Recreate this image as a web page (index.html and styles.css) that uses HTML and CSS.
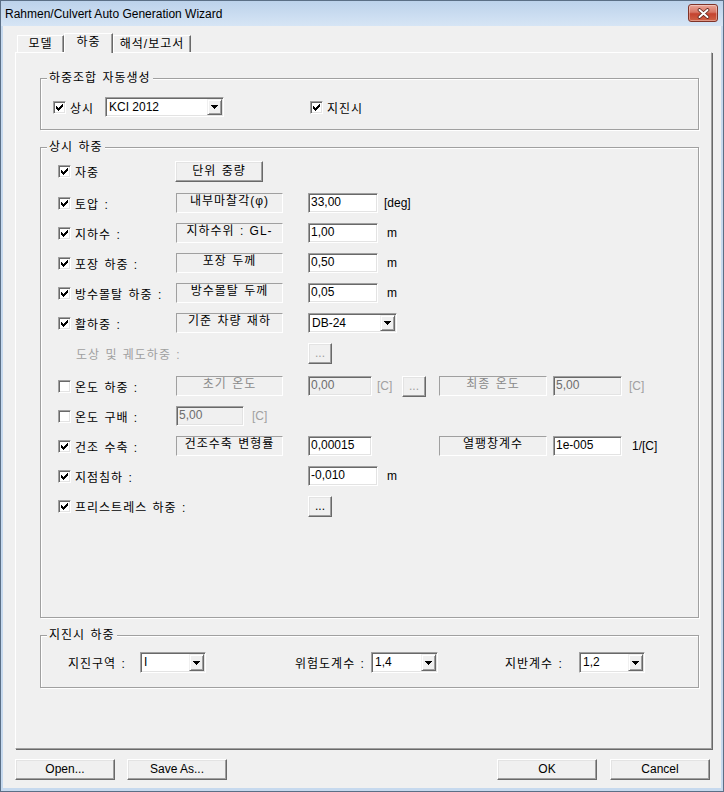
FILE: index.html
```html
<!DOCTYPE html>
<html lang="ko">
<head>
  <meta charset="UTF-8">
  <title>Rahmen/Culvert Auto Generation Wizard</title>
  <link rel="stylesheet" href="styles.css">
</head>
<body>
  <div class="window">
    <div class="titlebar">
      <span class="title">Rahmen/Culvert Auto Generation Wizard</span>
      <span class="close-btn">
        <svg width="13" height="11" viewBox="0 0 13 11">
          <path d="M2.5 2L10.5 9M10.5 2L2.5 9" stroke="#5b231b" stroke-width="3.6" stroke-linecap="round" fill="none"/>
          <path d="M2.5 2L10.5 9M10.5 2L2.5 9" stroke="#fff" stroke-width="2" stroke-linecap="round" fill="none"/>
        </svg>
      </span>
    </div>

    <div class="client">
      <div class="tabs">
        <div class="tab t1">모델</div>
        <div class="tab t2 active">하중</div>
        <div class="tab t3">해석/보고서</div>
      </div>

      <div class="pane">
        <!-- 하중조합 -->
        <div class="group g1">
          <span class="legend">하중조합 자동생성</span>
          <div class="g1-row">
            <label class="chk-lbl w52"><span class="chk"><svg width="7" height="7" viewBox="0 0 7 7"><path d="M6 0h1v1H6zM5 1h2v1H5zM0 2h1v1H0zM4 2h3v1H4zM0 3h2v1H0zM3 3h3v1H3zM0 4h5v1H0zM1 5h3v1H1zM2 6h1v1H2z"/></svg></span>상시</label>
            <div class="combo w119"><span class="combo-val">KCI 2012</span><span class="drop"><svg width="7" height="4" viewBox="0 0 7 4"><path d="M0 0h7v1H0zM1 1h5v1H1zM2 2h3v1H2zM3 3h1v1H3z"/></svg></span></div>
            <label class="chk-lbl ml86"><span class="chk"><svg width="7" height="7" viewBox="0 0 7 7"><path d="M6 0h1v1H6zM5 1h2v1H5zM0 2h1v1H0zM4 2h3v1H4zM0 3h2v1H0zM3 3h3v1H3zM0 4h5v1H0zM1 5h3v1H1zM2 6h1v1H2z"/></svg></span>지진시</label>
          </div>
        </div>

        <!-- 상시 하중 -->
        <div class="group g2">
          <span class="legend">상시 하중</span>

          <div class="row">
            <label class="c1"><span class="chk"><svg width="7" height="7" viewBox="0 0 7 7"><path d="M6 0h1v1H6zM5 1h2v1H5zM0 2h1v1H0zM4 2h3v1H4zM0 3h2v1H0zM3 3h3v1H3zM0 4h5v1H0zM1 5h3v1H1zM2 6h1v1H2z"/></svg></span>자중</label>
            <div class="c2"><span class="btn w88 kr">단위 중량</span></div>
          </div>

          <div class="row mt2">
            <label class="c1"><span class="chk"><svg width="7" height="7" viewBox="0 0 7 7"><path d="M6 0h1v1H6zM5 1h2v1H5zM0 2h1v1H0zM4 2h3v1H4zM0 3h2v1H0zM3 3h3v1H3zM0 4h5v1H0zM1 5h3v1H1zM2 6h1v1H2z"/></svg></span>토압 :</label>
            <div class="c2"><span class="sbox">내부마찰각(φ)</span></div>
            <span class="edit w70">33,00</span>
            <span class="unit ml6">[deg]</span>
          </div>

          <div class="row">
            <label class="c1"><span class="chk"><svg width="7" height="7" viewBox="0 0 7 7"><path d="M6 0h1v1H6zM5 1h2v1H5zM0 2h1v1H0zM4 2h3v1H4zM0 3h2v1H0zM3 3h3v1H3zM0 4h5v1H0zM1 5h3v1H1zM2 6h1v1H2z"/></svg></span>지하수 :</label>
            <div class="c2"><span class="sbox">지하수위 : GL-</span></div>
            <span class="edit w70">1,00</span>
            <span class="unit ml9">m</span>
          </div>

          <div class="row">
            <label class="c1"><span class="chk"><svg width="7" height="7" viewBox="0 0 7 7"><path d="M6 0h1v1H6zM5 1h2v1H5zM0 2h1v1H0zM4 2h3v1H4zM0 3h2v1H0zM3 3h3v1H3zM0 4h5v1H0zM1 5h3v1H1zM2 6h1v1H2z"/></svg></span>포장 하중 :</label>
            <div class="c2"><span class="sbox">포장 두께</span></div>
            <span class="edit w70">0,50</span>
            <span class="unit ml9">m</span>
          </div>

          <div class="row">
            <label class="c1"><span class="chk"><svg width="7" height="7" viewBox="0 0 7 7"><path d="M6 0h1v1H6zM5 1h2v1H5zM0 2h1v1H0zM4 2h3v1H4zM0 3h2v1H0zM3 3h3v1H3zM0 4h5v1H0zM1 5h3v1H1zM2 6h1v1H2z"/></svg></span>방수몰탈 하중 :</label>
            <div class="c2"><span class="sbox">방수몰탈 두께</span></div>
            <span class="edit w70">0,05</span>
            <span class="unit ml9">m</span>
          </div>

          <div class="row">
            <label class="c1"><span class="chk"><svg width="7" height="7" viewBox="0 0 7 7"><path d="M6 0h1v1H6zM5 1h2v1H5zM0 2h1v1H0zM4 2h3v1H4zM0 3h2v1H0zM3 3h3v1H3zM0 4h5v1H0zM1 5h3v1H1zM2 6h1v1H2z"/></svg></span>활하중 :</label>
            <div class="c2"><span class="sbox">기준 차량 재하</span></div>
            <div class="combo w89"><span class="combo-val">DB-24</span><span class="drop"><svg width="7" height="4" viewBox="0 0 7 4"><path d="M0 0h7v1H0zM1 1h5v1H1zM2 2h3v1H2zM3 3h1v1H3z"/></svg></span></div>
          </div>

          <div class="row">
            <span class="c12 dis">도상 및 궤도하중 :</span>
            <span class="btn w24 dis">...</span>
          </div>

          <div class="row mt3">
            <label class="c1"><span class="chk"></span>온도 하중 :</label>
            <div class="c2"><span class="sbox dis">초기 온도</span></div>
            <span class="edit w64 dis">0,00</span>
            <span class="unit ml5 w25 dis">[C]</span>
            <span class="btn w24 dis">...</span>
            <span class="sbox w108 ml13 dis">최종 온도</span>
            <span class="edit w69 ml6 dis">5,00</span>
            <span class="unit ml7 dis">[C]</span>
          </div>

          <div class="row">
            <label class="c1"><span class="chk"></span>온도 구배 :</label>
            <div class="c2">
              <span class="edit w68 ml1 dis">5,00</span>
              <span class="unit ml8 dis">[C]</span>
            </div>
          </div>

          <div class="row">
            <label class="c1"><span class="chk"><svg width="7" height="7" viewBox="0 0 7 7"><path d="M6 0h1v1H6zM5 1h2v1H5zM0 2h1v1H0zM4 2h3v1H4zM0 3h2v1H0zM3 3h3v1H3zM0 4h5v1H0zM1 5h3v1H1zM2 6h1v1H2z"/></svg></span>건조 수축 :</label>
            <div class="c2"><span class="sbox">건조수축 변형률</span></div>
            <span class="edit w64">0,00015</span>
            <span class="sbox w108 ml67">열팽창계수</span>
            <span class="edit w69 ml6">1e-005</span>
            <span class="unit ml10">1/[C]</span>
          </div>

          <div class="row">
            <label class="c1"><span class="chk"><svg width="7" height="7" viewBox="0 0 7 7"><path d="M6 0h1v1H6zM5 1h2v1H5zM0 2h1v1H0zM4 2h3v1H4zM0 3h2v1H0zM3 3h3v1H3zM0 4h5v1H0zM1 5h3v1H1zM2 6h1v1H2z"/></svg></span>지점침하 :</label>
            <div class="c2"></div>
            <span class="edit w70">-0,010</span>
            <span class="unit ml9">m</span>
          </div>

          <div class="row">
            <label class="c1"><span class="chk"><svg width="7" height="7" viewBox="0 0 7 7"><path d="M6 0h1v1H6zM5 1h2v1H5zM0 2h1v1H0zM4 2h3v1H4zM0 3h2v1H0zM3 3h3v1H3zM0 4h5v1H0zM1 5h3v1H1zM2 6h1v1H2z"/></svg></span>프리스트레스 하중 :</label>
            <div class="c2"></div>
            <span class="btn w24">...</span>
          </div>
        </div>

        <!-- 지진시 하중 -->
        <div class="group g3">
          <span class="legend">지진시 하중</span>
          <div class="g3-row">
            <span class="eq-lbl w72">지진구역 :</span>
            <div class="combo h21 w66"><span class="combo-val">I</span><span class="drop"><svg width="7" height="4" viewBox="0 0 7 4"><path d="M0 0h7v1H0zM1 1h5v1H1zM2 2h3v1H2zM3 3h1v1H3z"/></svg></span></div>
            <span class="eq-lbl w76 ml89">위험도계수 :</span>
            <div class="combo h21 w67"><span class="combo-val">1,4</span><span class="drop"><svg width="7" height="4" viewBox="0 0 7 4"><path d="M0 0h7v1H0zM1 1h5v1H1zM2 2h3v1H2zM3 3h1v1H3z"/></svg></span></div>
            <span class="eq-lbl w74 ml67">지반계수 :</span>
            <div class="combo h21 w66"><span class="combo-val">1,2</span><span class="drop"><svg width="7" height="4" viewBox="0 0 7 4"><path d="M0 0h7v1H0zM1 1h5v1H1zM2 2h3v1H2zM3 3h1v1H3z"/></svg></span></div>
          </div>
        </div>
      </div>

      <div class="buttons">
        <span class="btn bw">Open...</span>
        <span class="btn bw ml12">Save As...</span>
        <span class="btn bw push">OK</span>
        <span class="btn bw ml13">Cancel</span>
      </div>
    </div>
  </div>
</body>
</html>
```

FILE: styles.css
```css
* {
  box-sizing: border-box;
}

body {
  margin: 0;
  background: #fff;
  color: #000;
  font-family: "Liberation Sans", "Noto Sans CJK KR", sans-serif;
  font-size: 12px;
}

.tab,
.legend,
.c1,
.c12,
.chk-lbl,
.sbox,
.eq-lbl,
.kr {
  letter-spacing: 1px;
  word-spacing: 1px;
}

.window {
  width: 724px;
  height: 792px;
  border: 1px solid #5b6f86;
  background: #c6d9ee;
  padding: 0 2px 3px;
  display: flex;
  flex-direction: column;
}

/* title bar */
.titlebar {
  height: 25px;
  margin: 0 -2px;
  padding: 0 5px 0 4px;
  background: linear-gradient(#bcd2eb, #d6e5f5);
  display: flex;
  justify-content: space-between;
  align-items: flex-start;
  flex: none;
}

.title {
  margin-top: 6px;
  line-height: 14px;
}

.close-btn {
  width: 30px;
  height: 18px;
  margin-top: 3px;
  border: 1px solid #7f3328;
  border-radius: 3px;
  background: linear-gradient(#eaa698, #d77564 45%, #c4432f 55%, #d06246);
  box-shadow: inset 0 0 0 1px rgba(255, 255, 255, 0.35);
  display: flex;
  align-items: center;
  justify-content: center;
}

/* client area */
.client {
  flex: 1;
  background: #f0f0f0;
  padding: 7px 9px 0 12px;
  display: flex;
  flex-direction: column;
}

.tabs {
  display: flex;
  align-items: flex-end;
  height: 19px;
  padding-left: 2px;
  position: relative;
  z-index: 1;
}

.tab {
  height: 17px;
  border-top: 1px solid #fff;
  border-left: 1px solid #fff;
  border-right: 1px solid #696969;
  box-shadow: inset -1px 0 0 #a0a0a0;
  background: #f0f0f0;
  text-align: center;
  line-height: 14px;
  padding-top: 1px;
  white-space: nowrap;
}

.tab.active {
  height: 20px;
  margin-bottom: -1px;
}

.t1 { width: 47px; }
.t2 { width: 49px; }
.t3 { width: 78px; }

.pane {
  width: 697px;
  height: 697px;
  border: 1px solid;
  border-color: #fff #a0a0a0 #a0a0a0 #fff;
  box-shadow: 1px 1px 0 #696969;
  padding: 25px 12px 0 24px;
  flex: none;
}

/* group boxes */
.group {
  position: relative;
  border: 1px solid #a0a0a0;
  box-shadow: inset 1px 1px 0 #fff, 1px 1px 0 #fff;
  margin-bottom: 17px;
}

.legend {
  position: absolute;
  top: -8px;
  left: 6px;
  padding: 0 2px;
  background: #f0f0f0;
  line-height: 14px;
  white-space: nowrap;
}

.g1 {
  height: 52px;
  padding: 18px 0 0 12px;
}

.g2 {
  height: 471px;
  padding: 8px 0 0 17px;
}

.g3 {
  height: 53px;
  padding: 16px 0 0 27px;
}

.g1-row,
.g3-row {
  display: flex;
  align-items: center;
  white-space: nowrap;
}

.row {
  display: flex;
  align-items: center;
  height: 30px;
  white-space: nowrap;
}

.mt2 { margin-top: 2px; }
.mt3 { margin-top: 3px; }

.c1 {
  width: 117px;
  flex: none;
  display: flex;
  align-items: center;
  gap: 4px;
}

.c2 {
  width: 133px;
  flex: none;
  display: flex;
  align-items: center;
}

.c12 {
  width: 250px;
  flex: none;
  padding-left: 18px;
}

.chk-lbl {
  display: flex;
  align-items: center;
  gap: 4px;
  flex: none;
}

/* checkbox */
.chk {
  width: 13px;
  height: 13px;
  flex: none;
  background: #fff;
  border: 1px solid;
  border-color: #a0a0a0 #fff #fff #a0a0a0;
  box-shadow: inset 1px 1px 0 #696969, inset -1px -1px 0 #e3e3e3;
  display: flex;
  align-items: center;
  justify-content: center;
}

.chk svg {
  display: block;
  shape-rendering: crispEdges;
}

/* static sunken label */
.sbox {
  width: 107px;
  height: 20px;
  margin-left: 1px;
  flex: none;
  border: 1px solid;
  border-color: #a0a0a0 #fff #fff #a0a0a0;
  text-align: center;
  line-height: 14px;
}

.sbox.w108 { width: 108px; }

/* edit field */
.edit {
  height: 20px;
  flex: none;
  background: #fff;
  border: 1px solid;
  border-color: #a0a0a0 #fff #fff #a0a0a0;
  box-shadow: inset 1px 1px 0 #696969, inset -1px -1px 0 #e3e3e3;
  padding: 1px 0 0 2px;
  line-height: 14px;
}

.edit.dis {
  background: #f0f0f0;
  color: #6d6d6d;
}

.unit { flex: none; }

/* combo box */
.combo {
  height: 20px;
  flex: none;
  display: flex;
  background: #fff;
  border: 1px solid;
  border-color: #a0a0a0 #fff #fff #a0a0a0;
  box-shadow: inset 1px 1px 0 #696969, inset -1px -1px 0 #e3e3e3;
  padding: 1px;
}

.combo.h21 { height: 21px; }

.combo-val {
  flex: 1;
  padding-left: 2px;
  line-height: 16px;
}

.drop {
  width: 15px;
  flex: none;
  background: #f0f0f0;
  border: 1px solid;
  border-color: #f0f0f0 #696969 #696969 #f0f0f0;
  box-shadow: inset 1px 1px 0 #fff, inset -1px -1px 0 #a0a0a0;
  display: flex;
  align-items: center;
  justify-content: center;
}

.drop svg {
  display: block;
  shape-rendering: crispEdges;
}

/* push button */
.btn {
  height: 21px;
  flex: none;
  background: #f0f0f0;
  border: 1px solid;
  border-color: #fff #696969 #696969 #fff;
  box-shadow: inset -1px -1px 0 #a0a0a0, inset 1px 1px 0 #e3e3e3;
  text-align: center;
  line-height: 19px;
}

.dis { color: #a0a0a0; }
.sbox.dis { color: #8a8a8a; }

.buttons {
  display: flex;
  margin-top: 10px;
  margin-right: 2px;
}

.bw { width: 100px; }
.push { margin-left: auto; }

.eq-lbl { flex: none; }

/* sizes */
.w24 { width: 24px; }
.w25 { width: 25px; }
.w52 { width: 52px; }
.w64 { width: 64px; }
.w66 { width: 66px; }
.w67 { width: 67px; }
.w68 { width: 68px; }
.w69 { width: 69px; }
.w70 { width: 70px; }
.w72 { width: 72px; }
.w74 { width: 74px; }
.w76 { width: 76px; }
.w88 { width: 88px; }
.w89 { width: 89px; }
.w119 { width: 119px; }

.ml1 { margin-left: 1px; }
.ml5 { margin-left: 5px; }
.ml6 { margin-left: 6px; }
.ml7 { margin-left: 7px; }
.ml8 { margin-left: 8px; }
.ml9 { margin-left: 9px; }
.ml10 { margin-left: 10px; }
.ml12 { margin-left: 12px; }
.ml13 { margin-left: 13px; }
.ml67 { margin-left: 67px; }
.ml86 { margin-left: 86px; }
.ml89 { margin-left: 89px; }
```
